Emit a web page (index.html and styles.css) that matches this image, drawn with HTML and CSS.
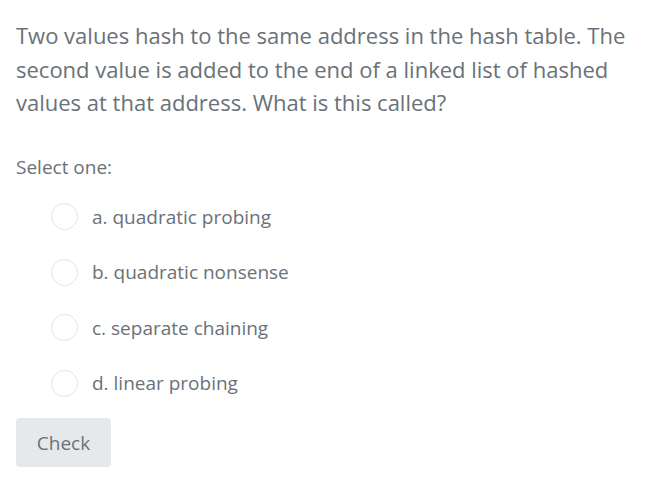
FILE: index.html
```html
<!DOCTYPE html>
<html>
<head>
<meta charset="utf-8">
<link rel="stylesheet" href="styles.css">
</head>
<body>
<div class="question">
  <p class="qtext">Two values hash to the same address in the hash table. The second value is added to the end of a linked list of hashed values at that address. What is this called?</p>
  <p class="prompt">Select one:</p>
  <div class="answers">
    <label class="option"><span class="radio"></span><span class="label">a. quadratic probing</span></label>
    <label class="option"><span class="radio"></span><span class="label">b. quadratic nonsense</span></label>
    <label class="option"><span class="radio"></span><span class="label">c. separate chaining</span></label>
    <label class="option"><span class="radio"></span><span class="label">d. linear probing</span></label>
  </div>
  <button class="check">Check</button>
</div>
</body>
</html>
```
FILE: styles.css
```css
html, body {
  margin: 0;
  padding: 0;
  background: #ffffff;
}
body {
  font-family: "Open Sans", sans-serif;
  color: #6a7178;
}
.question {
  padding: 19px 16px;
}
.qtext {
  margin: 0;
  font-size: 22px;
  line-height: 33.5px;
  width: 640px;
}
.prompt {
  margin: 34px 0 0 0;
  font-size: 19px;
  line-height: 26px;
}
.answers {
  display: flex;
  flex-direction: column;
  padding-left: 35px;
  margin-top: 23px;
  gap: 27.5px;
}
.option {
  display: flex;
  align-items: center;
  gap: 14px;
  height: 28px;
}
.radio {
  width: 27px;
  height: 27px;
  border: 1px solid #dfe3e6;
  border-radius: 50%;
  box-sizing: border-box;
}
.label {
  font-size: 19px;
}
.check {
  display: block;
  margin-top: 21px;
  width: 95px;
  height: 49px;
  border: none;
  border-radius: 4px;
  background: #e5e9ec;
  color: #6a7178;
  font-family: "Open Sans", sans-serif;
  font-size: 19px;
  padding: 0;
}
```
